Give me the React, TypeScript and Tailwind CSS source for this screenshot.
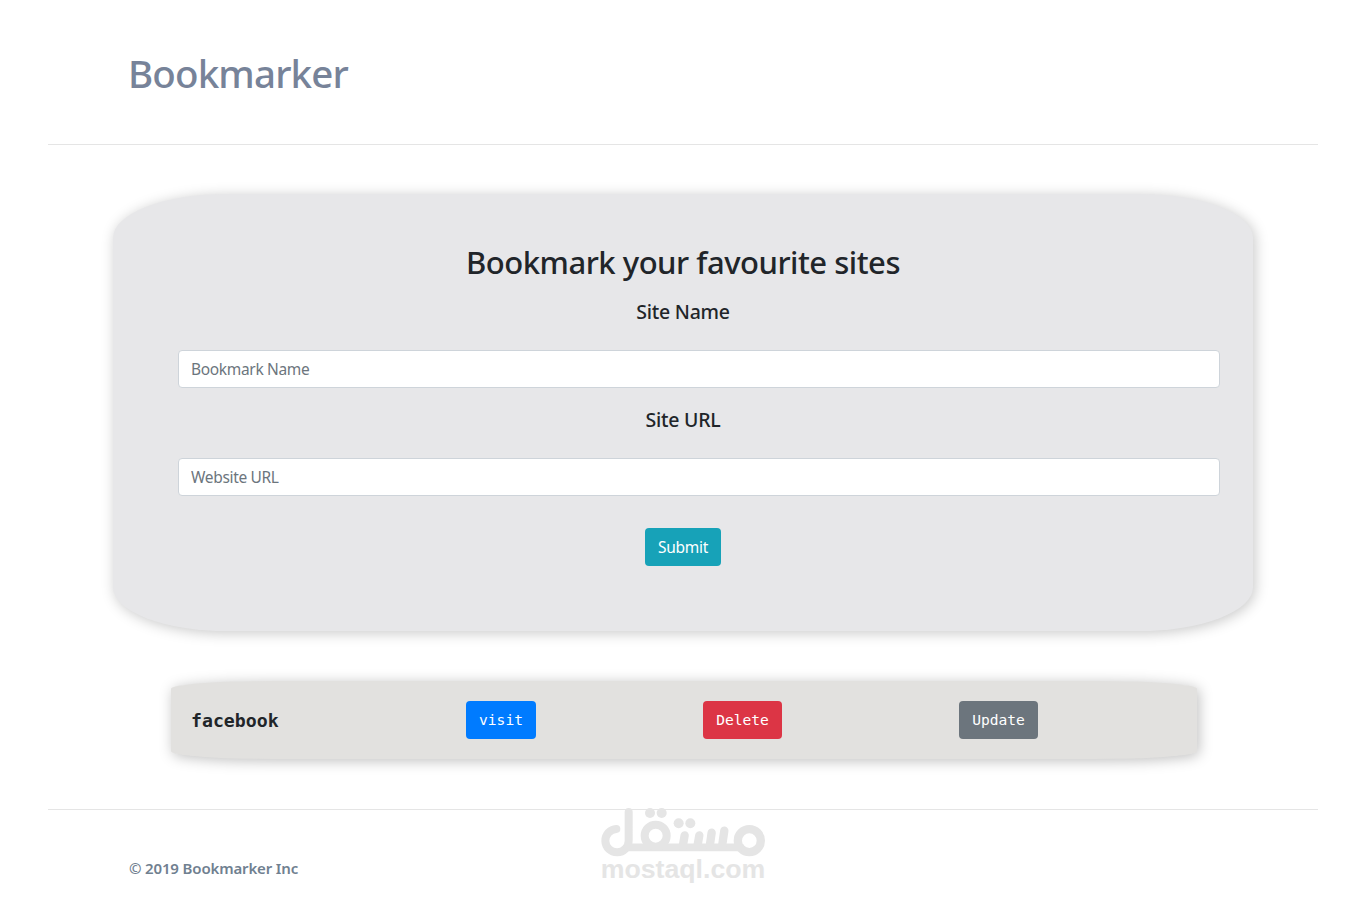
import { useState } from 'react';

interface Bookmark {
  id: number;
  name: string;
  url: string;
}

const initialBookmarks: Bookmark[] = [
  { id: 1, name: 'facebook', url: 'https://www.facebook.com' },
];

const inputClass =
  "block h-[38px] w-full rounded-[4px] border border-[#ced4da] bg-white px-3 text-[15.5px] tracking-[-0.33px] text-[#495057] outline-none placeholder:text-[#6c757d]";

function Watermark() {
  return (
    <div className="absolute left-[600px] top-[807px] flex w-[166px] flex-col text-[#e5e5e5]" aria-hidden="true">
      <svg className="block h-[50px] w-[166px]" viewBox="60 36 498 150" fill="none" stroke="currentColor" strokeLinecap="round" strokeLinejoin="round">
        <circle cx="508" cy="137" r="34.5" strokeWidth="25" />
        <path d="M109 102 A35 35 0 1 0 146 137 V51" strokeWidth="24" />
        <path d="M143 157 H482" strokeWidth="23" />
        <circle cx="227" cy="122" r="33" strokeWidth="24" />
        <path d="M314 121 L308 155 M358 121 L352 155 M395 113 L389 155 M433 107 L426 155" strokeWidth="25" />
        <g fill="currentColor" stroke="none">
          <circle cx="210" cy="54" r="15" />
          <circle cx="245" cy="54" r="15" />
          <circle cx="296" cy="85" r="15" />
          <circle cx="331" cy="85" r="15" />
        </g>
      </svg>
      <span className="-mt-[2px] block text-center font-['Liberation_Sans',sans-serif] text-[26.7px] leading-[28px] font-bold whitespace-nowrap">
        mostaql.com
      </span>
    </div>
  );
}

export default function App() {
  const [bookmarks, setBookmarks] = useState<Bookmark[]>(initialBookmarks);
  const [name, setName] = useState('');
  const [url, setUrl] = useState('');

  const handleSubmit = (e: React.FormEvent) => {
    e.preventDefault();
    if (!name.trim() || !url.trim()) return;
    setBookmarks(prev => [...prev, { id: Date.now(), name, url }]);
    setName('');
    setUrl('');
  };

  const removeBookmark = (id: number) => {
    setBookmarks(prev => prev.filter(b => b.id !== id));
  };

  // Put the values back in the form so they can be submitted again
  const editBookmark = (bookmark: Bookmark) => {
    setName(bookmark.name);
    setUrl(bookmark.url);
    removeBookmark(bookmark.id);
  };

  return (
    <div className="relative min-h-[902px] bg-white px-12 font-['Noto_Sans','Open_Sans',sans-serif] text-[#212529]">
      <header className="flex h-[145px] border-b border-[#e5e5e5] pt-12 pl-20">
        <h1 className="h-12 text-[38.5px] leading-[50px] font-medium tracking-[-0.85px] text-[#778399]">Bookmarker</h1>
      </header>

      <main className="flex flex-col items-center pt-[49px]">
        <form
          onSubmit={handleSubmit}
          className="flex h-[437px] w-[1140px] flex-col items-center rounded-[10%] bg-[#e7e7e9] pt-12 shadow-[2px_2px_14px_rgba(0,0,0,0.22)]"
        >
          <h2 className="h-[42px] text-[31px] leading-[40px] font-medium tracking-[-0.48px]">Bookmark your favourite sites</h2>
          <label htmlFor="siteName" className="mt-4 text-[19.5px] leading-6 font-medium tracking-[-0.25px]">Site Name</label>
          <div className="mt-[26px] w-full pr-[33px] pl-[65px]">
            <input id="siteName" className={inputClass} placeholder="Bookmark Name" value={name} onChange={(e) => setName(e.target.value)} />
          </div>
          <label htmlFor="siteUrl" className="mt-5 text-[19.5px] leading-6 font-medium tracking-[-0.25px]">Site URL</label>
          <div className="mt-[26px] w-full pr-[33px] pl-[65px]">
            <input id="siteUrl" className={inputClass} placeholder="Website URL" value={url} onChange={(e) => setUrl(e.target.value)} />
          </div>
          <button type="submit" className="mt-8 h-[38px] w-[76px] rounded-[4px] bg-[#17a2b8] pt-[2px] text-[15.5px] tracking-[-0.25px] text-white">
            Submit
          </button>
        </form>

        <div className="mt-[50px] ml-[2px] flex w-[1026px] flex-col gap-4 font-['DejaVu_Sans_Mono',monospace]">
          {bookmarks.map((bookmark) => (
            <div
              key={bookmark.id}
              className="grid h-[78px] grid-cols-[275px_237px_256px_1fr] items-center rounded-[10%] bg-[#e2e1df] pl-5 shadow-[2px_2px_14px_rgba(0,0,0,0.25)]"
            >
              <h5 className="pt-[2px] text-[18.2px] font-bold">{bookmark.name}</h5>
              <a href={bookmark.url} className="flex h-[38px] w-[70px] items-center justify-center rounded-[4px] bg-[#007bff] text-[14.6px] text-white">
                visit
              </a>
              <button onClick={() => removeBookmark(bookmark.id)} className="h-[38px] w-[79px] rounded-[4px] bg-[#dc3545] text-[14.6px] text-white">
                Delete
              </button>
              <button onClick={() => editBookmark(bookmark)} className="h-[38px] w-[79px] rounded-[4px] bg-[#6c757d] text-[14.6px] text-white">
                Update
              </button>
            </div>
          ))}
        </div>
      </main>

      <footer className="mt-[50px] border-t border-[#e5e5e5] pt-[46px] pl-[81px]">
        <p className="text-[15px] leading-6 font-semibold tracking-[-0.15px] text-[#708090]">© 2019 Bookmarker Inc</p>
      </footer>

      <Watermark />
    </div>
  );
}
